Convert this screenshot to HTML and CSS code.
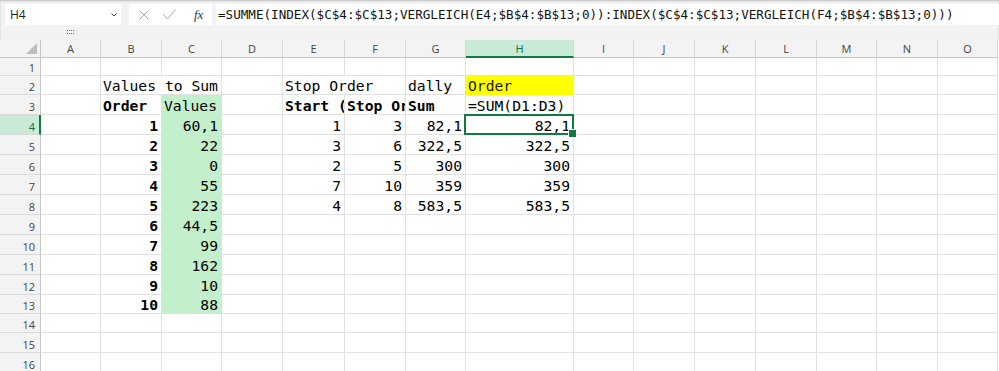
FILE: index.html
```html
<!DOCTYPE html>
<html lang="de">
<head>
<meta charset="utf-8">
<title>Excel</title>
<link rel="stylesheet" href="styles.css">
</head>
<body>
<div class="top">
  <div class="fbar">
    <div class="namebox"><span>H4</span><svg class="chev" width="6" height="4" viewBox="0 0 6 4"><path d="M0.5 0.5 L3 3 L5.5 0.5" fill="none" stroke="#444" stroke-width="1"/></svg></div>
    <div class="btns">
      <svg class="ix" width="10" height="10" viewBox="0 0 10 10"><path d="M0.5 0.5 L9.5 9.5 M9.5 0.5 L0.5 9.5" stroke="#a6a6a6" stroke-width="1" fill="none"/></svg>
      <svg class="ic" width="13" height="11" viewBox="0 0 13 11"><path d="M0.5 5.5 L4.5 10 L12.5 0.5" stroke="#a6a6a6" stroke-width="1" fill="none"/></svg>
      <span class="fx">fx</span>
    </div>
    <div class="formula">=SUMME(INDEX($C$4:$C$13;VERGLEICH(E4;$B$4:$B$13;0)):INDEX($C$4:$C$13;VERGLEICH(F4;$B$4:$B$13;0)))</div>
  </div>
  <div class="handle"><svg width="8" height="5" viewBox="0 0 8 5"><g fill="#6a6a6a"><rect x="0" y="0" width="1" height="1"/><rect x="2" y="0" width="1" height="1"/><rect x="4" y="0" width="1" height="1"/><rect x="6" y="0" width="1" height="1"/><rect x="0" y="3" width="1" height="1"/><rect x="2" y="3" width="1" height="1"/><rect x="4" y="3" width="1" height="1"/><rect x="6" y="3" width="1" height="1"/></g></svg></div>
</div>
<div class="sheet">
  <div class="ch corner"></div><div class="ch">A</div><div class="ch">B</div><div class="ch">C</div><div class="ch">D</div><div class="ch">E</div><div class="ch">F</div><div class="ch">G</div><div class="ch hl">H</div><div class="ch">I</div><div class="ch">J</div><div class="ch">K</div><div class="ch">L</div><div class="ch">M</div><div class="ch">N</div><div class="ch">O</div>

  <div class="rh">1</div><div class="c"></div><div class="c"></div><div class="c"></div><div class="c"></div><div class="c"></div><div class="c"></div><div class="c"></div><div class="c"></div><div class="c"></div><div class="c"></div><div class="c"></div><div class="c"></div><div class="c"></div><div class="c"></div><div class="c"></div>

  <div class="rh">2</div><div class="c"></div><div class="c span2">Values to Sum</div><div class="c"></div><div class="c span2">Stop Order</div><div class="c">dally</div><div class="c y">Order</div><div class="c"></div><div class="c"></div><div class="c"></div><div class="c"></div><div class="c"></div><div class="c"></div><div class="c"></div>

  <div class="rh">3</div><div class="c"></div><div class="c b">Order</div><div class="c g">Values</div><div class="c"></div><div class="c b">Start (Order)</div><div class="c b">Stop Order</div><div class="c b">Sum</div><div class="c">=SUM(D1:D3)</div><div class="c"></div><div class="c"></div><div class="c"></div><div class="c"></div><div class="c"></div><div class="c"></div><div class="c"></div>

  <div class="rh hl">4</div><div class="c"></div><div class="c b n">1</div><div class="c g n">60,1</div><div class="c"></div><div class="c n">1</div><div class="c n">3</div><div class="c n">82,1</div><div class="c n sel">82,1</div><div class="c"></div><div class="c"></div><div class="c"></div><div class="c"></div><div class="c"></div><div class="c"></div><div class="c"></div>

  <div class="rh">5</div><div class="c"></div><div class="c b n">2</div><div class="c g n">22</div><div class="c"></div><div class="c n">3</div><div class="c n">6</div><div class="c n">322,5</div><div class="c n">322,5</div><div class="c"></div><div class="c"></div><div class="c"></div><div class="c"></div><div class="c"></div><div class="c"></div><div class="c"></div>

  <div class="rh">6</div><div class="c"></div><div class="c b n">3</div><div class="c g n">0</div><div class="c"></div><div class="c n">2</div><div class="c n">5</div><div class="c n">300</div><div class="c n">300</div><div class="c"></div><div class="c"></div><div class="c"></div><div class="c"></div><div class="c"></div><div class="c"></div><div class="c"></div>

  <div class="rh">7</div><div class="c"></div><div class="c b n">4</div><div class="c g n">55</div><div class="c"></div><div class="c n">7</div><div class="c n">10</div><div class="c n">359</div><div class="c n">359</div><div class="c"></div><div class="c"></div><div class="c"></div><div class="c"></div><div class="c"></div><div class="c"></div><div class="c"></div>

  <div class="rh">8</div><div class="c"></div><div class="c b n">5</div><div class="c g n">223</div><div class="c"></div><div class="c n">4</div><div class="c n">8</div><div class="c n">583,5</div><div class="c n">583,5</div><div class="c"></div><div class="c"></div><div class="c"></div><div class="c"></div><div class="c"></div><div class="c"></div><div class="c"></div>

  <div class="rh">9</div><div class="c"></div><div class="c b n">6</div><div class="c g n">44,5</div><div class="c"></div><div class="c"></div><div class="c"></div><div class="c"></div><div class="c"></div><div class="c"></div><div class="c"></div><div class="c"></div><div class="c"></div><div class="c"></div><div class="c"></div><div class="c"></div>

  <div class="rh">10</div><div class="c"></div><div class="c b n">7</div><div class="c g n">99</div><div class="c"></div><div class="c"></div><div class="c"></div><div class="c"></div><div class="c"></div><div class="c"></div><div class="c"></div><div class="c"></div><div class="c"></div><div class="c"></div><div class="c"></div><div class="c"></div>

  <div class="rh">11</div><div class="c"></div><div class="c b n">8</div><div class="c g n">162</div><div class="c"></div><div class="c"></div><div class="c"></div><div class="c"></div><div class="c"></div><div class="c"></div><div class="c"></div><div class="c"></div><div class="c"></div><div class="c"></div><div class="c"></div><div class="c"></div>

  <div class="rh">12</div><div class="c"></div><div class="c b n">9</div><div class="c g n">10</div><div class="c"></div><div class="c"></div><div class="c"></div><div class="c"></div><div class="c"></div><div class="c"></div><div class="c"></div><div class="c"></div><div class="c"></div><div class="c"></div><div class="c"></div><div class="c"></div>

  <div class="rh">13</div><div class="c"></div><div class="c b n">10</div><div class="c g n">88</div><div class="c"></div><div class="c"></div><div class="c"></div><div class="c"></div><div class="c"></div><div class="c"></div><div class="c"></div><div class="c"></div><div class="c"></div><div class="c"></div><div class="c"></div><div class="c"></div>

  <div class="rh">14</div><div class="c"></div><div class="c"></div><div class="c"></div><div class="c"></div><div class="c"></div><div class="c"></div><div class="c"></div><div class="c"></div><div class="c"></div><div class="c"></div><div class="c"></div><div class="c"></div><div class="c"></div><div class="c"></div><div class="c"></div>

  <div class="rh">15</div><div class="c"></div><div class="c"></div><div class="c"></div><div class="c"></div><div class="c"></div><div class="c"></div><div class="c"></div><div class="c"></div><div class="c"></div><div class="c"></div><div class="c"></div><div class="c"></div><div class="c"></div><div class="c"></div><div class="c"></div>

  <div class="rh">16</div><div class="c"></div><div class="c"></div><div class="c"></div><div class="c"></div><div class="c"></div><div class="c"></div><div class="c"></div><div class="c"></div><div class="c"></div><div class="c"></div><div class="c"></div><div class="c"></div><div class="c"></div><div class="c"></div><div class="c"></div>
</div>
</body>
</html>
```
FILE: styles.css
```css
* { box-sizing: border-box; }
html, body { margin: 0; padding: 0; }
body {
  width: 999px;
  height: 371px;
  overflow: hidden;
  background: #f3f3f3;
  font-family: "Open Sans", "Noto Sans", sans-serif;
}
.top {
  height: 40px;
  background: #f3f3f3;
  box-shadow: inset 0 1px 2px rgba(0, 0, 0, 0.22);
}
.fbar {
  display: flex;
  padding: 4px 0 0 5px;
  height: 25px;
}
.namebox {
  width: 116px;
  height: 21px;
  background: #fff;
  display: flex;
  align-items: center;
  justify-content: space-between;
  padding: 0 4px 0 5px;
  font-size: 12px;
  color: #222;
}
.chev { display: block; }
.btns {
  margin-left: 8px;
  width: 83px;
  height: 21px;
  background: #fff;
  display: flex;
  align-items: center;
}
.ix { display: block; margin-left: 10px; }
.ic { display: block; margin-left: 14px; }
.fx {
  margin-left: 18px;
  font-family: "Liberation Serif", "DejaVu Serif", serif;
  font-style: italic;
  font-size: 13px;
  color: #333;
}
.formula {
  margin-left: 4px;
  flex: 1;
  height: 21px;
  background: #fff;
  font-family: "DejaVu Sans Mono", "Liberation Mono", monospace;
  font-size: 12.6px;
  line-height: 21px;
  padding-left: 2px;
  white-space: nowrap;
  overflow: hidden;
  color: #111;
}
.handle { height: 15px; padding: 5px 0 0 67px; }
.handle svg { display: block; }

.sheet {
  display: grid;
  grid-template-columns: 41px 60px 61px 60px 61px 62px 61px 60px 108px 60px 61px 61px 61px 60px 61px 60px;
  grid-template-rows: 18px 18px 19px 20px 20px 20px 20px 20px 20px 20px 20px 20px 20px 19px 19px 20px 20px;
  background: #fff;
}
.ch {
  background: #f3f3f3;
  border-right: 1px solid #d6d6d6;
  border-bottom: 1px solid #c6c6c6;
  display: flex;
  align-items: center;
  justify-content: center;
  font-size: 11px;
  line-height: 15px;
  color: #444;
}
.ch.corner {
  border-right-color: #c6c6c6;
  position: relative;
}
.ch.corner::after {
  content: "";
  position: absolute;
  right: 3px;
  bottom: 3px;
  width: 0;
  height: 0;
  border-left: 11px solid transparent;
  border-bottom: 11px solid #bdbdbd;
}
.ch.hl {
  background: #caead8;
  color: #0f703b;
  border-bottom: 2px solid #107c41;
}
.rh {
  background: #f3f3f3;
  border-right: 1px solid #c6c6c6;
  border-bottom: 1px solid #dadada;
  display: flex;
  justify-content: flex-end;
  align-items: flex-end;
  padding-right: 5px;
  font-size: 11px;
  line-height: 15px;
  color: #444;
}
.rh.hl {
  background: #caead8;
  color: #0f703b;
  border-right: 2px solid #107c41;
  padding-right: 4px;
}
.c {
  border-right: 1px solid #e1e1e1;
  border-bottom: 1px solid #e1e1e1;
  display: flex;
  align-items: flex-end;
  padding: 0 3px 0 2px;
  font-family: "DejaVu Sans Mono", "Liberation Mono", monospace;
  font-size: 14.7px;
  line-height: 17px;
  color: #000;
  white-space: nowrap;
  overflow: hidden;
}
.span2 { grid-column: span 2; }
.n { justify-content: flex-end; }
.b { font-weight: bold; }
.g { background: #c4efcc; border-color: #c4efcc; }
.y { background: #ffff00; border-color: #ffff00; color: #1a1a00; }
.sel { position: relative; overflow: visible; }
.sel::after {
  content: "";
  position: absolute;
  left: -2px;
  top: -1px;
  right: -1px;
  bottom: -1px;
  border: 2px solid #107c41;
}
.sel::before {
  content: "";
  position: absolute;
  width: 7px;
  height: 7px;
  right: -4px;
  bottom: -4px;
  background: #107c41;
  border: 1px solid #fff;
  z-index: 1;
}
```
